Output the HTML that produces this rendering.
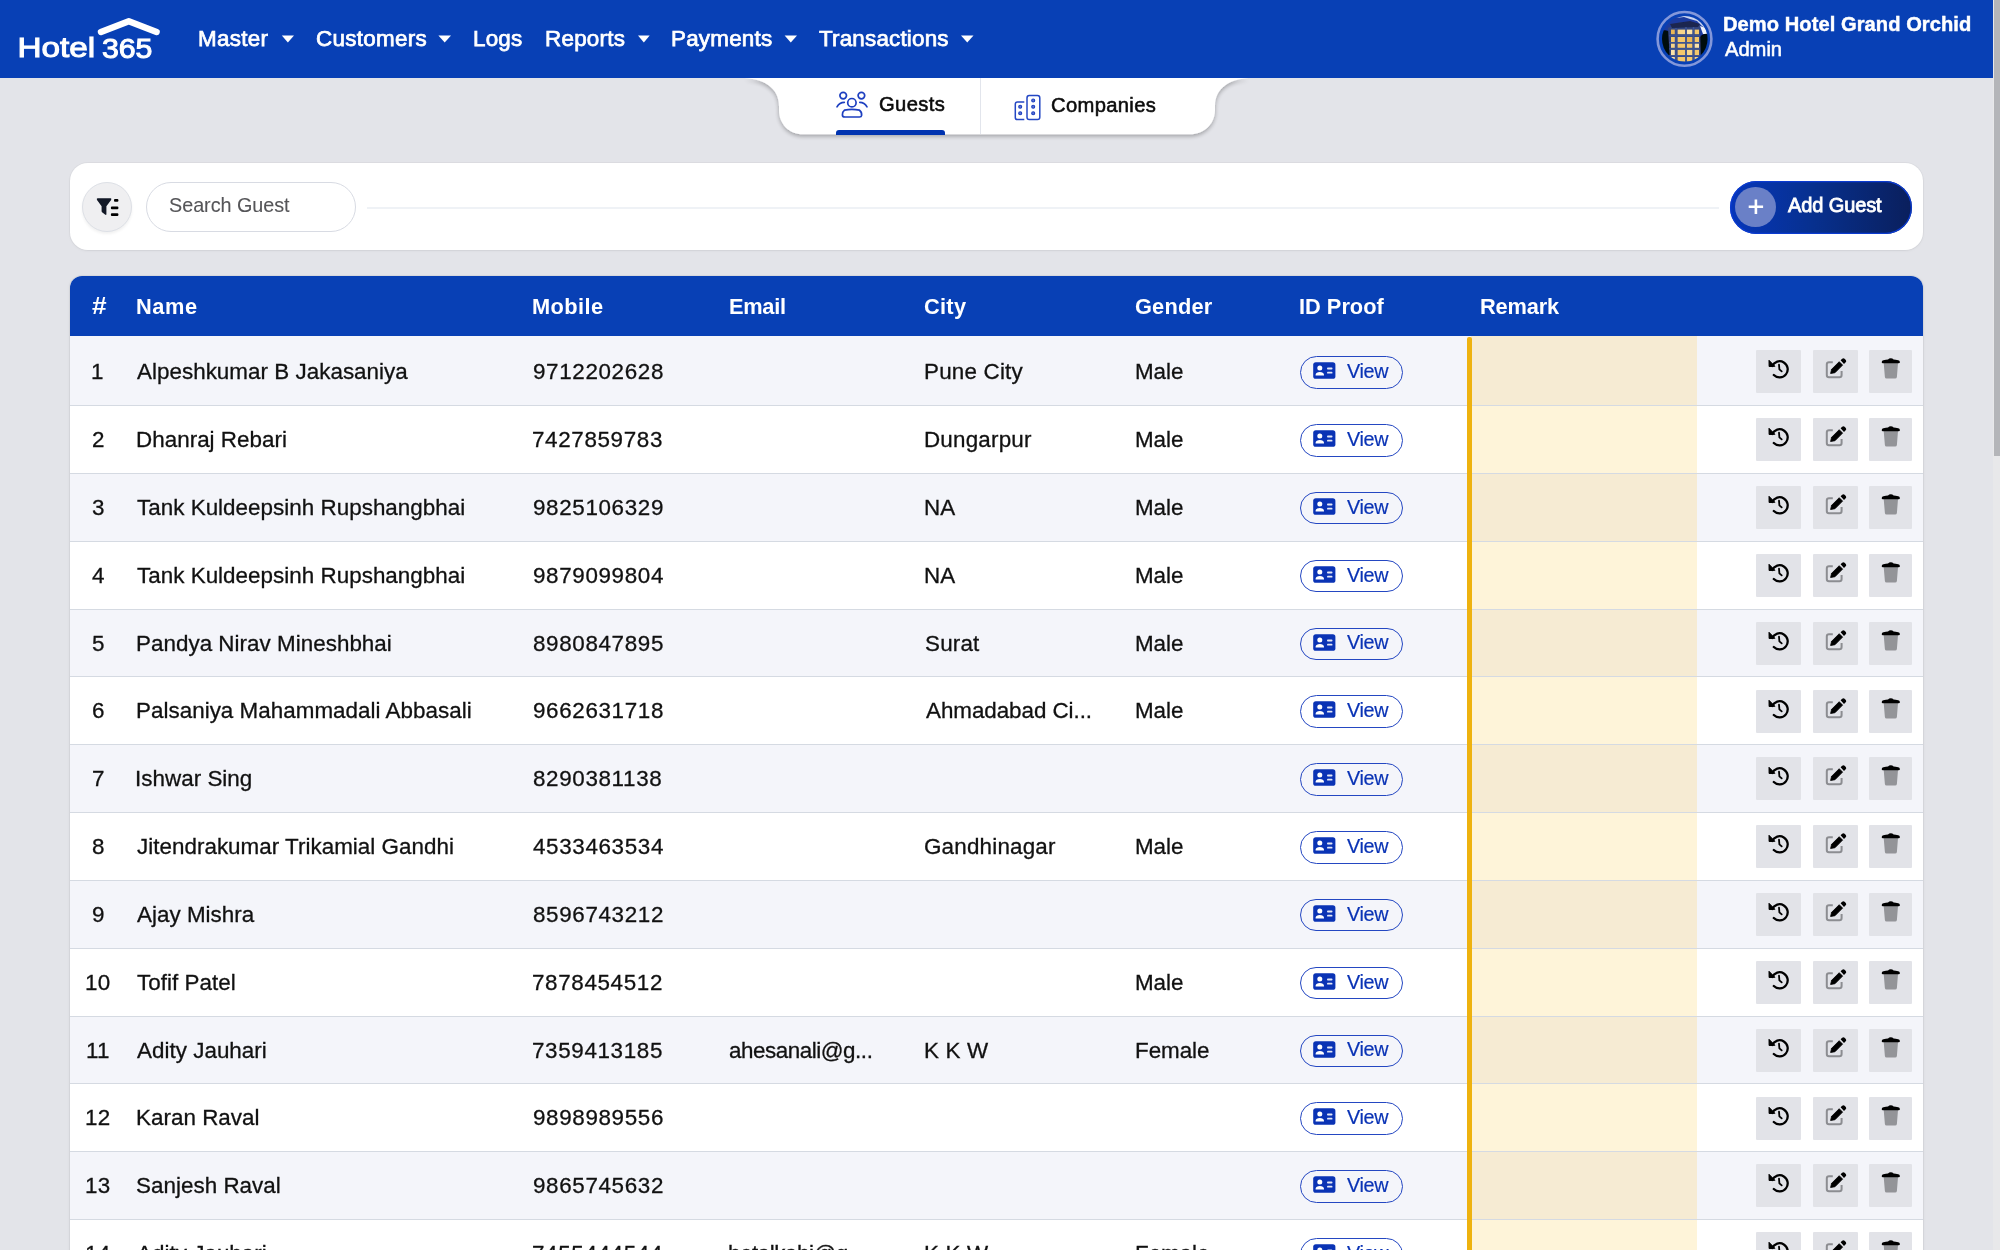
<!DOCTYPE html>
<html><head><meta charset="utf-8"><title>Hotel 365 - Guests</title>
<style>
html,body{margin:0;padding:0;}
body{width:2000px;height:1250px;overflow:hidden;position:relative;background:#E3E4E9;font-family:"Liberation Sans",sans-serif;}
.t{position:absolute;white-space:nowrap;will-change:transform;}
.a{position:absolute;}
svg{position:absolute;overflow:visible;}
</style></head><body>

<div class="a" style="left:0;top:0;width:2000px;height:78px;background:#0840B5;"></div>
<div class="t" style="left:18.14px;top:32px;font-size:27.60px;line-height:31px;color:#fff;-webkit-text-stroke:1.0px #fff;transform:scaleX(1.2061);transform-origin:2.26px 0;">Hotel</div>
<div class="t" style="left:102.35px;top:33px;font-size:27.60px;line-height:31px;color:#fff;-webkit-text-stroke:1.0px #fff;transform:scaleX(1.0976);transform-origin:1.05px 0;">365</div>
<svg style="left:0;top:0" width="200" height="78"><polyline points="101,32 128.8,21.3 156.6,32" fill="none" stroke="#fff" stroke-width="6.4" stroke-linecap="round" stroke-linejoin="round"/></svg>
<div class="t" style="left:198.01px;top:26px;font-size:22.40px;line-height:25px;color:#fff;letter-spacing:0.33px;-webkit-text-stroke:0.75px #fff;">Master</div>
<div class="t" style="left:316.21px;top:26px;font-size:22.40px;line-height:25px;color:#fff;letter-spacing:0.30px;-webkit-text-stroke:0.75px #fff;">Customers</div>
<div class="t" style="left:472.71px;top:26px;font-size:22.40px;line-height:25px;color:#fff;letter-spacing:0.23px;-webkit-text-stroke:0.75px #fff;">Logs</div>
<div class="t" style="left:544.91px;top:26px;font-size:22.40px;line-height:25px;color:#fff;letter-spacing:0.26px;-webkit-text-stroke:0.75px #fff;">Reports</div>
<div class="t" style="left:670.91px;top:26px;font-size:22.40px;line-height:25px;color:#fff;letter-spacing:0.23px;-webkit-text-stroke:0.75px #fff;">Payments</div>
<div class="t" style="left:819.05px;top:26px;font-size:22.40px;line-height:25px;color:#fff;letter-spacing:0.20px;-webkit-text-stroke:0.75px #fff;">Transactions</div>
<svg style="left:0;top:0" width="1000" height="78"><polygon points="281.8,35.6 294,35.6 287.9,42.4" fill="#fff"/><polygon points="438.4,35.6 451,35.6 444.7,42.4" fill="#fff"/><polygon points="638,35.6 649.7,35.6 643.85,42.4" fill="#fff"/><polygon points="784.6,35.6 797,35.6 790.8,42.4" fill="#fff"/><polygon points="961,35.6 973.5,35.6 967.25,42.4" fill="#fff"/></svg>
<svg style="left:1650px;top:5px" width="70" height="70" viewBox="1650 5 70 70">
<defs><clipPath id="av"><circle cx="1684.8" cy="38.9" r="22.8"/></clipPath>
<filter id="avb"><feGaussianBlur stdDeviation="0.45"/></filter></defs>
<circle cx="1684.5" cy="38.9" r="26.9" fill="none" stroke="#8397DA" stroke-width="2.6"/>
<g clip-path="url(#av)"><g filter="url(#avb)">
<rect x="1660" y="15" width="50" height="50" fill="#1C3A9E"/>
<path d="M1676 18 L1684 17 L1690 19 L1697 21 L1702 26 L1708 30 L1708 22 L1690 14Z" fill="#C9D4F0"/>
<path d="M1700 26 L1706 28 L1709 34 L1703 34Z" fill="#F2F4FA"/>
<path d="M1661 31 Q1666 29 1670 32 L1672 40 L1671 66 L1660 66Z" fill="#06070C"/>
<path d="M1709 34 Q1703 33 1700 37 L1699 66 L1709 66Z" fill="#06070C"/>
<path d="M1668 28 L1680 22 L1700 25 L1701 63 L1670 63Z" fill="#33457E"/>
<path d="M1670 24 L1690 21 L1700 24 L1698 27 L1672 28Z" fill="#1A2550"/>
<rect x="1671" y="29.6" width="3.8" height="4.6" fill="#E9B654"/><rect x="1677.6" y="29.6" width="7.6" height="4.6" fill="#F7D58A"/><rect x="1686.8" y="29.6" width="5.6" height="4.6" fill="#FBE2A8"/><rect x="1694.6" y="29.6" width="4.4" height="4.6" fill="#F4C76A"/><rect x="1671" y="37" width="3.8" height="5" fill="#F4C76A"/><rect x="1677.6" y="37" width="7.6" height="5" fill="#F4C76A"/><rect x="1686.8" y="37" width="5.6" height="5" fill="#E9B654"/><rect x="1694.6" y="37" width="4.4" height="5" fill="#F4C76A"/><rect x="1671" y="43.6" width="3.8" height="4.2" fill="#F7D58A"/><rect x="1677.6" y="43.6" width="7.6" height="4.2" fill="#F4C76A"/><rect x="1686.8" y="43.6" width="5.6" height="4.2" fill="#F4C76A"/><rect x="1694.6" y="43.6" width="4.4" height="4.2" fill="#FBE2A8"/><rect x="1671" y="49.8" width="3.8" height="5.4" fill="#FBE2A8"/><rect x="1677.6" y="49.8" width="7.6" height="5.4" fill="#F4C76A"/><rect x="1686.8" y="49.8" width="5.6" height="5.4" fill="#F7D58A"/><rect x="1694.6" y="49.8" width="4.4" height="5.4" fill="#F4C76A"/><rect x="1671" y="57" width="3.8" height="4.6" fill="#FBE2A8"/><rect x="1677.6" y="57" width="7.6" height="4.6" fill="#F4C76A"/><rect x="1686.8" y="57" width="5.6" height="4.6" fill="#F4C76A"/><rect x="1694.6" y="57" width="4.4" height="4.6" fill="#F7D58A"/><path d="M1676 28 L1676 64 M1686 27 L1686 64 M1693.5 27 L1693.5 64" stroke="#3E5595" stroke-width="1.4"/>
<path d="M1669 35.8 L1700 35.8 M1669 42.6 L1700 42.6 M1669 48.9 L1700 48.9 M1669 55.9 L1700 55.9" stroke="#3E5595" stroke-width="1.1"/>
</g></g></svg>
<div class="t" style="left:1723.46px;top:13px;font-size:20.10px;line-height:22px;font-weight:700;color:#fff;letter-spacing:0.07px;-webkit-text-stroke:0.45px #fff;">Demo Hotel Grand Orchid</div>
<div class="t" style="left:1724.76px;top:38px;font-size:20.20px;line-height:22px;color:#fff;letter-spacing:-0.04px;-webkit-text-stroke:0.55px #fff;">Admin</div>
<svg style="left:700px;top:70px" width="600" height="90" viewBox="700 70 600 90">
<defs><filter id="tsh" x="-10%" y="-30%" width="120%" height="170%"><feGaussianBlur in="SourceAlpha" stdDeviation="2.2"/><feOffset dy="1.5"/><feComponentTransfer><feFuncA type="linear" slope="0.3"/></feComponentTransfer><feMerge><feMergeNode/><feMergeNode in="SourceGraphic"/></feMerge></filter></defs>
<path filter="url(#tsh)" d="M740 78 L1253 78 C1230 78 1215 88 1215 106 L1215 110 C1215 124 1204 134.3 1190 134.3 L803 134.3 C789 134.3 779 124 779 110 L779 106 C779 88 764 78 740 78 Z" fill="#fff"/>
</svg>
<div class="a" style="left:0;top:76px;width:2000px;height:2px;background:#0840B5"></div>
<div class="a" style="left:980px;top:78px;width:1.2px;height:56px;background:#E2E5EC"></div>
<div class="a" style="left:836px;top:129.5px;width:109px;height:5px;background:#0033B0;border-radius:3px 3px 0 0"></div>
<div class="t" style="left:878.98px;top:93px;font-size:20.20px;line-height:22px;color:#0b0b0b;letter-spacing:0.37px;-webkit-text-stroke:0.55px #0b0b0b;">Guests</div>
<div class="t" style="left:1051.47px;top:94px;font-size:20.20px;line-height:22px;color:#0b0b0b;letter-spacing:0.34px;-webkit-text-stroke:0.55px #0b0b0b;">Companies</div>
<svg style="left:830px;top:88px" width="45" height="35" viewBox="830 88 45 35" fill="none" stroke="#1D3FC0" stroke-width="1.7" stroke-linecap="round">
<circle cx="843.2" cy="95.6" r="3.3"/><circle cx="861.4" cy="95.6" r="3.3"/><circle cx="851.9" cy="102.7" r="4.2"/>
<path d="M844.5 110.2 Q851.8 108.5 859.5 110.2 Q862 112 861.6 115.5 Q861.4 117 859.5 117 L844.8 117 Q842.4 117 842.4 115 Q842.2 112 844.5 110.2Z"/>
<path d="M837 106.8 Q839.5 102.3 844.3 102.3"/><path d="M859.8 102.3 Q864.5 102.3 867 106.8"/>
</svg>
<svg style="left:1010px;top:90px" width="35" height="35" viewBox="1010 90 35 35" fill="none" stroke="#2447C4" stroke-width="1.5">
<path d="M1024.3 102 L1017.5 102 Q1015.3 102 1015.3 104.2 L1015.3 117.4 Q1015.3 119.6 1017.5 119.6 L1024.3 119.6"/>
<rect x="1027" y="95.6" width="12.8" height="24" rx="2.3"/>
<g fill="#5C74D0" stroke="#1D3FC0" stroke-width="1.1"><circle cx="1033.2" cy="100.5" r="1.5"/><circle cx="1033.2" cy="106.8" r="1.5"/><circle cx="1033.2" cy="113.2" r="1.5"/>
<circle cx="1020.2" cy="106.8" r="1.5"/><circle cx="1020.2" cy="113.2" r="1.5"/></g>
</svg>
<div class="a" style="left:70px;top:163px;width:1853px;height:87px;background:#fff;border-radius:18px;box-shadow:0 0 0 1px rgba(0,0,0,0.035),0 1px 3px rgba(0,0,0,0.05)"></div>
<div class="a" style="left:81.5px;top:181.5px;width:48.5px;height:48.5px;background:#EFEFF1;border:1px solid #DDE0E6;border-radius:50%;box-shadow:0 2px 3px rgba(0,0,0,0.06)"></div>
<div class="a" style="left:145.5px;top:181.5px;width:208px;height:48.5px;background:#fff;border:1.3px solid #D8DBE3;border-radius:26px"></div>
<div class="t" style="left:169.10px;top:194px;font-size:19.80px;line-height:22px;color:#555558;letter-spacing:-0.03px;-webkit-text-stroke:0.1px #555558;">Search Guest</div>
<div class="a" style="left:367px;top:206.8px;width:1352px;height:2px;background:#EFF2F6"></div>
<svg style="left:90px;top:190px" width="36" height="34" viewBox="90 190 36 34">
<path d="M97.6 198.3 L110.6 198.3 Q111.9 198.5 111.1 199.9 L106.4 206.2 L106.4 214 Q106.4 215.6 105 214.6 L102.4 212.6 Q101.6 212 101.6 211 L101.6 206.2 L97 199.9 Q96.3 198.5 97.6 198.3Z" fill="#121826"/>
<rect x="114" y="199" width="4.4" height="2.8" rx="1" fill="#000"/><rect x="110.9" y="206.4" width="7.5" height="2.8" rx="1" fill="#000"/><rect x="110.9" y="213.3" width="7.5" height="2.8" rx="1" fill="#000"/>
</svg>
<div class="a" style="left:1729.7px;top:181px;width:182px;height:53px;border-radius:27px;background:linear-gradient(90deg,#0636BA 0%,#07308F 45%,#0A1F5C 100%);box-shadow:inset 0 0 0 1.3px #0B3BD0"></div>
<div class="a" style="left:1735.3px;top:186.8px;width:41px;height:40.5px;border-radius:50%;background:#6A80C7"></div>
<svg style="left:1740px;top:190px" width="32" height="32" viewBox="1740 190 32 32"><path d="M1755.9 199.5 V213.9 M1748.7 206.7 H1763.1" stroke="#fff" stroke-width="2.6"/></svg>
<div class="t" style="left:1787.96px;top:194px;font-size:20.00px;line-height:22px;color:#fff;letter-spacing:-0.11px;-webkit-text-stroke:0.8px #fff;">Add Guest</div>
<div class="a" style="left:70px;top:276.4px;width:1853px;height:1000px;background:#fff;border-radius:12px 12px 0 0;box-shadow:0 0 0 1px rgba(0,0,0,0.04),0 1px 4px rgba(0,0,0,0.06)"></div>
<div class="a" style="left:70px;top:276.4px;width:1853px;height:60px;background:#0840B5;border-radius:12px 12px 0 0"></div>
<div class="t" style="left:92.01px;top:293px;font-size:23.00px;line-height:26px;font-weight:700;color:#fff;transform:scaleX(1.1422);transform-origin:0.39px 0;">#</div>
<div class="t" style="left:136.04px;top:294px;font-size:21.80px;line-height:25px;font-weight:700;color:#fff;letter-spacing:0.57px;">Name</div>
<div class="t" style="left:531.74px;top:294px;font-size:21.80px;line-height:25px;font-weight:700;color:#fff;letter-spacing:0.43px;">Mobile</div>
<div class="t" style="left:728.54px;top:294px;font-size:21.80px;line-height:25px;font-weight:700;color:#fff;letter-spacing:-0.28px;">Email</div>
<div class="t" style="left:924.11px;top:294px;font-size:21.80px;line-height:25px;font-weight:700;color:#fff;letter-spacing:0.28px;">City</div>
<div class="t" style="left:1135.41px;top:294px;font-size:21.80px;line-height:25px;font-weight:700;color:#fff;letter-spacing:0.17px;">Gender</div>
<div class="t" style="left:1299.04px;top:294px;font-size:21.80px;line-height:25px;font-weight:700;color:#fff;">ID Proof</div>
<div class="t" style="left:1480.44px;top:294px;font-size:21.80px;line-height:25px;font-weight:700;color:#fff;letter-spacing:-0.18px;">Remark</div>
<div class="a" style="left:70px;top:336.00px;width:1853px;height:69.00px;background:#F4F5FA"></div>
<div class="a" style="left:1471px;top:336.00px;width:226px;height:69.00px;background:#F6EBD3"></div>
<div class="a" style="left:70px;top:405.00px;width:1853px;height:68.00px;background:#FFFFFF"></div>
<div class="a" style="left:1471px;top:405.00px;width:226px;height:68.00px;background:#FEF4D9"></div>
<div class="a" style="left:70px;top:473.00px;width:1853px;height:68.00px;background:#F4F5FA"></div>
<div class="a" style="left:1471px;top:473.00px;width:226px;height:68.00px;background:#F6EBD3"></div>
<div class="a" style="left:70px;top:541.00px;width:1853px;height:68.00px;background:#FFFFFF"></div>
<div class="a" style="left:1471px;top:541.00px;width:226px;height:68.00px;background:#FEF4D9"></div>
<div class="a" style="left:70px;top:609.00px;width:1853px;height:67.00px;background:#F4F5FA"></div>
<div class="a" style="left:1471px;top:609.00px;width:226px;height:67.00px;background:#F6EBD3"></div>
<div class="a" style="left:70px;top:676.00px;width:1853px;height:68.00px;background:#FFFFFF"></div>
<div class="a" style="left:1471px;top:676.00px;width:226px;height:68.00px;background:#FEF4D9"></div>
<div class="a" style="left:70px;top:744.00px;width:1853px;height:68.00px;background:#F4F5FA"></div>
<div class="a" style="left:1471px;top:744.00px;width:226px;height:68.00px;background:#F6EBD3"></div>
<div class="a" style="left:70px;top:812.00px;width:1853px;height:68.00px;background:#FFFFFF"></div>
<div class="a" style="left:1471px;top:812.00px;width:226px;height:68.00px;background:#FEF4D9"></div>
<div class="a" style="left:70px;top:880.00px;width:1853px;height:68.00px;background:#F4F5FA"></div>
<div class="a" style="left:1471px;top:880.00px;width:226px;height:68.00px;background:#F6EBD3"></div>
<div class="a" style="left:70px;top:948.00px;width:1853px;height:68.00px;background:#FFFFFF"></div>
<div class="a" style="left:1471px;top:948.00px;width:226px;height:68.00px;background:#FEF4D9"></div>
<div class="a" style="left:70px;top:1016.00px;width:1853px;height:67.00px;background:#F4F5FA"></div>
<div class="a" style="left:1471px;top:1016.00px;width:226px;height:67.00px;background:#F6EBD3"></div>
<div class="a" style="left:70px;top:1083.00px;width:1853px;height:68.00px;background:#FFFFFF"></div>
<div class="a" style="left:1471px;top:1083.00px;width:226px;height:68.00px;background:#FEF4D9"></div>
<div class="a" style="left:70px;top:1151.00px;width:1853px;height:68.00px;background:#F4F5FA"></div>
<div class="a" style="left:1471px;top:1151.00px;width:226px;height:68.00px;background:#F6EBD3"></div>
<div class="a" style="left:70px;top:1219.00px;width:1853px;height:68.00px;background:#FFFFFF"></div>
<div class="a" style="left:1471px;top:1219.00px;width:226px;height:68.00px;background:#FEF4D9"></div>
<div class="a" style="left:70px;top:405px;width:1853px;height:1px;background:#D5DAE2"></div>
<div class="a" style="left:70px;top:473px;width:1853px;height:1px;background:#D5DAE2"></div>
<div class="a" style="left:70px;top:541px;width:1853px;height:1px;background:#D5DAE2"></div>
<div class="a" style="left:70px;top:609px;width:1853px;height:1px;background:#D5DAE2"></div>
<div class="a" style="left:70px;top:676px;width:1853px;height:1px;background:#D5DAE2"></div>
<div class="a" style="left:70px;top:744px;width:1853px;height:1px;background:#D5DAE2"></div>
<div class="a" style="left:70px;top:812px;width:1853px;height:1px;background:#D5DAE2"></div>
<div class="a" style="left:70px;top:880px;width:1853px;height:1px;background:#D5DAE2"></div>
<div class="a" style="left:70px;top:948px;width:1853px;height:1px;background:#D5DAE2"></div>
<div class="a" style="left:70px;top:1016px;width:1853px;height:1px;background:#D5DAE2"></div>
<div class="a" style="left:70px;top:1083px;width:1853px;height:1px;background:#D5DAE2"></div>
<div class="a" style="left:70px;top:1151px;width:1853px;height:1px;background:#D5DAE2"></div>
<div class="a" style="left:70px;top:1219px;width:1853px;height:1px;background:#D5DAE2"></div>
<div class="a" style="left:70px;top:1287px;width:1853px;height:1px;background:#D5DAE2"></div>
<div class="t" style="left:91.35px;top:359px;font-size:22.40px;line-height:25px;color:#111;letter-spacing:0.20px;-webkit-text-stroke:0.3px #111;">1</div>
<div class="t" style="left:137.46px;top:359px;font-size:22.40px;line-height:25px;color:#111;letter-spacing:0.03px;-webkit-text-stroke:0.3px #111;">Alpeshkumar B Jakasaniya</div>
<div class="t" style="left:532.55px;top:359px;font-size:22.40px;line-height:25px;color:#111;letter-spacing:0.65px;-webkit-text-stroke:0.3px #111;">9712202628</div>
<div class="t" style="left:923.76px;top:359px;font-size:22.40px;line-height:25px;color:#111;letter-spacing:0.20px;-webkit-text-stroke:0.3px #111;">Pune City</div>
<div class="t" style="left:1135.26px;top:359px;font-size:22.40px;line-height:25px;color:#111;letter-spacing:-0.05px;-webkit-text-stroke:0.3px #111;">Male</div>
<div class="a" style="left:1300px;top:356.20px;width:103px;height:32.5px;box-sizing:border-box;border:1.8px solid #2447C2;border-radius:17px"></div>
<svg style="left:1310px;top:356.20px" width="30" height="32" viewBox="1310 356.2 30 32"><rect x="1313.2" y="362.4" width="22.2" height="16.6" rx="2.6" fill="#0A33B5"/><circle cx="1319.8" cy="368.2" r="2.5" fill="#fff"/><path d="M1315.6 375 Q1316 372.2 1319.8 372.2 Q1323.6 372.2 1324 375 L1324 375.6 L1315.6 375.6Z" fill="#fff"/><rect x="1327" y="367.8" width="5.5" height="1.8" rx="0.9" fill="#E4E8F6"/><rect x="1327" y="372" width="5.5" height="1.8" rx="0.9" fill="#E4E8F6"/></svg>
<div class="t" style="left:1347.31px;top:360px;font-size:19.80px;line-height:22px;color:#0A33B5;letter-spacing:-0.32px;-webkit-text-stroke:0.2px #0A33B5;">View</div>
<div class="a" style="left:1756.3px;top:350.30px;width:45px;height:43px;background:#E2E3E8;border-radius:1px"></div>
<div class="a" style="left:1812.6px;top:350.30px;width:45px;height:43px;background:#E2E3E8;border-radius:1px"></div>
<div class="a" style="left:1868.7px;top:350.30px;width:43.3px;height:43px;background:#E2E3E8;border-radius:1px"></div>
<svg style="left:1756px;top:350.30px" width="160" height="44" viewBox="1756 350.3 160 44"><g transform="translate(0,0)">
<path d="M1772.2 366.3 A8.1 8.1 0 1 1 1773.8 375.3" fill="none" stroke="#000" stroke-width="2.3" stroke-linecap="round"/>
<path d="M1769 360.6 L1774.9 366.6 L1769.1 366.8 Z" fill="#000" stroke="#000" stroke-width="1" stroke-linejoin="round"/>
<path d="M1779 365 L1779.4 369.6 L1781.7 371.7" fill="none" stroke="#000" stroke-width="1.8" stroke-linecap="round" stroke-linejoin="round"/>
<path d="M1832.8 362.6 L1829 362.6 Q1826.8 362.6 1826.8 364.8 L1826.8 375.4 Q1826.8 377.6 1829 377.6 L1839.4 377.6 Q1841.6 377.6 1841.6 375.4 L1841.6 371.4" fill="none" stroke="#8C8D91" stroke-width="2"/>
<path d="M1830.6 373.8 L1831.6 369.6 L1839.2 362 L1842.6 365.4 L1835 373 Z" fill="#000" stroke="#000" stroke-width="0.8" stroke-linejoin="round"/>
<path d="M1840.6 360.6 L1842.2 359 Q1843.4 357.9 1844.6 359 L1845.8 360.2 Q1846.8 361.4 1845.7 362.5 L1844 364.2 Z" fill="#000"/>
<path d="M1883.7 363.4 L1898 363.4 L1896.9 377.2 Q1896.7 378.8 1895.1 378.8 L1886.6 378.8 Q1885 378.8 1884.9 377.2 Z" fill="#939498"/>
<path d="M1883 363.6 Q1881.6 363.6 1881.7 362.3 Q1881.9 360.9 1883.4 360.6 Q1886 360 1888 359.8 Q1889.1 358.5 1890.8 358.5 Q1892.5 358.5 1893.6 359.8 Q1895.6 360 1898.2 360.6 Q1899.7 360.9 1899.9 362.3 Q1900 363.6 1898.6 363.6 Z" fill="#000"/>
</g></svg>
<div class="t" style="left:91.64px;top:427px;font-size:22.40px;line-height:25px;color:#111;letter-spacing:0.20px;-webkit-text-stroke:0.3px #111;">2</div>
<div class="t" style="left:135.66px;top:427px;font-size:22.40px;line-height:25px;color:#111;letter-spacing:0.03px;-webkit-text-stroke:0.3px #111;">Dhanraj Rebari</div>
<div class="t" style="left:532.45px;top:427px;font-size:22.40px;line-height:25px;color:#111;letter-spacing:0.65px;-webkit-text-stroke:0.3px #111;">7427859783</div>
<div class="t" style="left:923.76px;top:427px;font-size:22.40px;line-height:25px;color:#111;letter-spacing:0.20px;-webkit-text-stroke:0.3px #111;">Dungarpur</div>
<div class="t" style="left:1135.26px;top:427px;font-size:22.40px;line-height:25px;color:#111;letter-spacing:-0.05px;-webkit-text-stroke:0.3px #111;">Male</div>
<div class="a" style="left:1300px;top:424.04px;width:103px;height:32.5px;box-sizing:border-box;border:1.8px solid #2447C2;border-radius:17px"></div>
<svg style="left:1310px;top:424.04px" width="30" height="32" viewBox="1310 356.2 30 32"><rect x="1313.2" y="362.4" width="22.2" height="16.6" rx="2.6" fill="#0A33B5"/><circle cx="1319.8" cy="368.2" r="2.5" fill="#fff"/><path d="M1315.6 375 Q1316 372.2 1319.8 372.2 Q1323.6 372.2 1324 375 L1324 375.6 L1315.6 375.6Z" fill="#fff"/><rect x="1327" y="367.8" width="5.5" height="1.8" rx="0.9" fill="#E4E8F6"/><rect x="1327" y="372" width="5.5" height="1.8" rx="0.9" fill="#E4E8F6"/></svg>
<div class="t" style="left:1347.31px;top:428px;font-size:19.80px;line-height:22px;color:#0A33B5;letter-spacing:-0.32px;-webkit-text-stroke:0.2px #0A33B5;">View</div>
<div class="a" style="left:1756.3px;top:418.14px;width:45px;height:43px;background:#E2E3E8;border-radius:1px"></div>
<div class="a" style="left:1812.6px;top:418.14px;width:45px;height:43px;background:#E2E3E8;border-radius:1px"></div>
<div class="a" style="left:1868.7px;top:418.14px;width:43.3px;height:43px;background:#E2E3E8;border-radius:1px"></div>
<svg style="left:1756px;top:418.14px" width="160" height="44" viewBox="1756 350.3 160 44"><g transform="translate(0,0)">
<path d="M1772.2 366.3 A8.1 8.1 0 1 1 1773.8 375.3" fill="none" stroke="#000" stroke-width="2.3" stroke-linecap="round"/>
<path d="M1769 360.6 L1774.9 366.6 L1769.1 366.8 Z" fill="#000" stroke="#000" stroke-width="1" stroke-linejoin="round"/>
<path d="M1779 365 L1779.4 369.6 L1781.7 371.7" fill="none" stroke="#000" stroke-width="1.8" stroke-linecap="round" stroke-linejoin="round"/>
<path d="M1832.8 362.6 L1829 362.6 Q1826.8 362.6 1826.8 364.8 L1826.8 375.4 Q1826.8 377.6 1829 377.6 L1839.4 377.6 Q1841.6 377.6 1841.6 375.4 L1841.6 371.4" fill="none" stroke="#8C8D91" stroke-width="2"/>
<path d="M1830.6 373.8 L1831.6 369.6 L1839.2 362 L1842.6 365.4 L1835 373 Z" fill="#000" stroke="#000" stroke-width="0.8" stroke-linejoin="round"/>
<path d="M1840.6 360.6 L1842.2 359 Q1843.4 357.9 1844.6 359 L1845.8 360.2 Q1846.8 361.4 1845.7 362.5 L1844 364.2 Z" fill="#000"/>
<path d="M1883.7 363.4 L1898 363.4 L1896.9 377.2 Q1896.7 378.8 1895.1 378.8 L1886.6 378.8 Q1885 378.8 1884.9 377.2 Z" fill="#939498"/>
<path d="M1883 363.6 Q1881.6 363.6 1881.7 362.3 Q1881.9 360.9 1883.4 360.6 Q1886 360 1888 359.8 Q1889.1 358.5 1890.8 358.5 Q1892.5 358.5 1893.6 359.8 Q1895.6 360 1898.2 360.6 Q1899.7 360.9 1899.9 362.3 Q1900 363.6 1898.6 363.6 Z" fill="#000"/>
</g></svg>
<div class="t" style="left:91.77px;top:495px;font-size:22.40px;line-height:25px;color:#111;letter-spacing:0.20px;-webkit-text-stroke:0.3px #111;">3</div>
<div class="t" style="left:137.00px;top:495px;font-size:22.40px;line-height:25px;color:#111;letter-spacing:0.03px;-webkit-text-stroke:0.3px #111;">Tank Kuldeepsinh Rupshangbhai</div>
<div class="t" style="left:532.55px;top:495px;font-size:22.40px;line-height:25px;color:#111;letter-spacing:0.65px;-webkit-text-stroke:0.3px #111;">9825106329</div>
<div class="t" style="left:923.76px;top:495px;font-size:22.40px;line-height:25px;color:#111;letter-spacing:0.20px;-webkit-text-stroke:0.3px #111;">NA</div>
<div class="t" style="left:1135.26px;top:495px;font-size:22.40px;line-height:25px;color:#111;letter-spacing:-0.05px;-webkit-text-stroke:0.3px #111;">Male</div>
<div class="a" style="left:1300px;top:491.88px;width:103px;height:32.5px;box-sizing:border-box;border:1.8px solid #2447C2;border-radius:17px"></div>
<svg style="left:1310px;top:491.88px" width="30" height="32" viewBox="1310 356.2 30 32"><rect x="1313.2" y="362.4" width="22.2" height="16.6" rx="2.6" fill="#0A33B5"/><circle cx="1319.8" cy="368.2" r="2.5" fill="#fff"/><path d="M1315.6 375 Q1316 372.2 1319.8 372.2 Q1323.6 372.2 1324 375 L1324 375.6 L1315.6 375.6Z" fill="#fff"/><rect x="1327" y="367.8" width="5.5" height="1.8" rx="0.9" fill="#E4E8F6"/><rect x="1327" y="372" width="5.5" height="1.8" rx="0.9" fill="#E4E8F6"/></svg>
<div class="t" style="left:1347.31px;top:496px;font-size:19.80px;line-height:22px;color:#0A33B5;letter-spacing:-0.32px;-webkit-text-stroke:0.2px #0A33B5;">View</div>
<div class="a" style="left:1756.3px;top:485.98px;width:45px;height:43px;background:#E2E3E8;border-radius:1px"></div>
<div class="a" style="left:1812.6px;top:485.98px;width:45px;height:43px;background:#E2E3E8;border-radius:1px"></div>
<div class="a" style="left:1868.7px;top:485.98px;width:43.3px;height:43px;background:#E2E3E8;border-radius:1px"></div>
<svg style="left:1756px;top:485.98px" width="160" height="44" viewBox="1756 350.3 160 44"><g transform="translate(0,0)">
<path d="M1772.2 366.3 A8.1 8.1 0 1 1 1773.8 375.3" fill="none" stroke="#000" stroke-width="2.3" stroke-linecap="round"/>
<path d="M1769 360.6 L1774.9 366.6 L1769.1 366.8 Z" fill="#000" stroke="#000" stroke-width="1" stroke-linejoin="round"/>
<path d="M1779 365 L1779.4 369.6 L1781.7 371.7" fill="none" stroke="#000" stroke-width="1.8" stroke-linecap="round" stroke-linejoin="round"/>
<path d="M1832.8 362.6 L1829 362.6 Q1826.8 362.6 1826.8 364.8 L1826.8 375.4 Q1826.8 377.6 1829 377.6 L1839.4 377.6 Q1841.6 377.6 1841.6 375.4 L1841.6 371.4" fill="none" stroke="#8C8D91" stroke-width="2"/>
<path d="M1830.6 373.8 L1831.6 369.6 L1839.2 362 L1842.6 365.4 L1835 373 Z" fill="#000" stroke="#000" stroke-width="0.8" stroke-linejoin="round"/>
<path d="M1840.6 360.6 L1842.2 359 Q1843.4 357.9 1844.6 359 L1845.8 360.2 Q1846.8 361.4 1845.7 362.5 L1844 364.2 Z" fill="#000"/>
<path d="M1883.7 363.4 L1898 363.4 L1896.9 377.2 Q1896.7 378.8 1895.1 378.8 L1886.6 378.8 Q1885 378.8 1884.9 377.2 Z" fill="#939498"/>
<path d="M1883 363.6 Q1881.6 363.6 1881.7 362.3 Q1881.9 360.9 1883.4 360.6 Q1886 360 1888 359.8 Q1889.1 358.5 1890.8 358.5 Q1892.5 358.5 1893.6 359.8 Q1895.6 360 1898.2 360.6 Q1899.7 360.9 1899.9 362.3 Q1900 363.6 1898.6 363.6 Z" fill="#000"/>
</g></svg>
<div class="t" style="left:91.94px;top:563px;font-size:22.40px;line-height:25px;color:#111;letter-spacing:0.20px;-webkit-text-stroke:0.3px #111;">4</div>
<div class="t" style="left:137.00px;top:563px;font-size:22.40px;line-height:25px;color:#111;letter-spacing:0.03px;-webkit-text-stroke:0.3px #111;">Tank Kuldeepsinh Rupshangbhai</div>
<div class="t" style="left:532.55px;top:563px;font-size:22.40px;line-height:25px;color:#111;letter-spacing:0.65px;-webkit-text-stroke:0.3px #111;">9879099804</div>
<div class="t" style="left:923.76px;top:563px;font-size:22.40px;line-height:25px;color:#111;letter-spacing:0.20px;-webkit-text-stroke:0.3px #111;">NA</div>
<div class="t" style="left:1135.26px;top:563px;font-size:22.40px;line-height:25px;color:#111;letter-spacing:-0.05px;-webkit-text-stroke:0.3px #111;">Male</div>
<div class="a" style="left:1300px;top:559.72px;width:103px;height:32.5px;box-sizing:border-box;border:1.8px solid #2447C2;border-radius:17px"></div>
<svg style="left:1310px;top:559.72px" width="30" height="32" viewBox="1310 356.2 30 32"><rect x="1313.2" y="362.4" width="22.2" height="16.6" rx="2.6" fill="#0A33B5"/><circle cx="1319.8" cy="368.2" r="2.5" fill="#fff"/><path d="M1315.6 375 Q1316 372.2 1319.8 372.2 Q1323.6 372.2 1324 375 L1324 375.6 L1315.6 375.6Z" fill="#fff"/><rect x="1327" y="367.8" width="5.5" height="1.8" rx="0.9" fill="#E4E8F6"/><rect x="1327" y="372" width="5.5" height="1.8" rx="0.9" fill="#E4E8F6"/></svg>
<div class="t" style="left:1347.31px;top:564px;font-size:19.80px;line-height:22px;color:#0A33B5;letter-spacing:-0.32px;-webkit-text-stroke:0.2px #0A33B5;">View</div>
<div class="a" style="left:1756.3px;top:553.82px;width:45px;height:43px;background:#E2E3E8;border-radius:1px"></div>
<div class="a" style="left:1812.6px;top:553.82px;width:45px;height:43px;background:#E2E3E8;border-radius:1px"></div>
<div class="a" style="left:1868.7px;top:553.82px;width:43.3px;height:43px;background:#E2E3E8;border-radius:1px"></div>
<svg style="left:1756px;top:553.82px" width="160" height="44" viewBox="1756 350.3 160 44"><g transform="translate(0,0)">
<path d="M1772.2 366.3 A8.1 8.1 0 1 1 1773.8 375.3" fill="none" stroke="#000" stroke-width="2.3" stroke-linecap="round"/>
<path d="M1769 360.6 L1774.9 366.6 L1769.1 366.8 Z" fill="#000" stroke="#000" stroke-width="1" stroke-linejoin="round"/>
<path d="M1779 365 L1779.4 369.6 L1781.7 371.7" fill="none" stroke="#000" stroke-width="1.8" stroke-linecap="round" stroke-linejoin="round"/>
<path d="M1832.8 362.6 L1829 362.6 Q1826.8 362.6 1826.8 364.8 L1826.8 375.4 Q1826.8 377.6 1829 377.6 L1839.4 377.6 Q1841.6 377.6 1841.6 375.4 L1841.6 371.4" fill="none" stroke="#8C8D91" stroke-width="2"/>
<path d="M1830.6 373.8 L1831.6 369.6 L1839.2 362 L1842.6 365.4 L1835 373 Z" fill="#000" stroke="#000" stroke-width="0.8" stroke-linejoin="round"/>
<path d="M1840.6 360.6 L1842.2 359 Q1843.4 357.9 1844.6 359 L1845.8 360.2 Q1846.8 361.4 1845.7 362.5 L1844 364.2 Z" fill="#000"/>
<path d="M1883.7 363.4 L1898 363.4 L1896.9 377.2 Q1896.7 378.8 1895.1 378.8 L1886.6 378.8 Q1885 378.8 1884.9 377.2 Z" fill="#939498"/>
<path d="M1883 363.6 Q1881.6 363.6 1881.7 362.3 Q1881.9 360.9 1883.4 360.6 Q1886 360 1888 359.8 Q1889.1 358.5 1890.8 358.5 Q1892.5 358.5 1893.6 359.8 Q1895.6 360 1898.2 360.6 Q1899.7 360.9 1899.9 362.3 Q1900 363.6 1898.6 363.6 Z" fill="#000"/>
</g></svg>
<div class="t" style="left:91.75px;top:631px;font-size:22.40px;line-height:25px;color:#111;letter-spacing:0.20px;-webkit-text-stroke:0.3px #111;">5</div>
<div class="t" style="left:135.66px;top:631px;font-size:22.40px;line-height:25px;color:#111;letter-spacing:0.03px;-webkit-text-stroke:0.3px #111;">Pandya Nirav Mineshbhai</div>
<div class="t" style="left:532.63px;top:631px;font-size:22.40px;line-height:25px;color:#111;letter-spacing:0.65px;-webkit-text-stroke:0.3px #111;">8980847895</div>
<div class="t" style="left:924.58px;top:631px;font-size:22.40px;line-height:25px;color:#111;letter-spacing:0.20px;-webkit-text-stroke:0.3px #111;">Surat</div>
<div class="t" style="left:1135.26px;top:631px;font-size:22.40px;line-height:25px;color:#111;letter-spacing:-0.05px;-webkit-text-stroke:0.3px #111;">Male</div>
<div class="a" style="left:1300px;top:627.56px;width:103px;height:32.5px;box-sizing:border-box;border:1.8px solid #2447C2;border-radius:17px"></div>
<svg style="left:1310px;top:627.56px" width="30" height="32" viewBox="1310 356.2 30 32"><rect x="1313.2" y="362.4" width="22.2" height="16.6" rx="2.6" fill="#0A33B5"/><circle cx="1319.8" cy="368.2" r="2.5" fill="#fff"/><path d="M1315.6 375 Q1316 372.2 1319.8 372.2 Q1323.6 372.2 1324 375 L1324 375.6 L1315.6 375.6Z" fill="#fff"/><rect x="1327" y="367.8" width="5.5" height="1.8" rx="0.9" fill="#E4E8F6"/><rect x="1327" y="372" width="5.5" height="1.8" rx="0.9" fill="#E4E8F6"/></svg>
<div class="t" style="left:1347.31px;top:631px;font-size:19.80px;line-height:22px;color:#0A33B5;letter-spacing:-0.32px;-webkit-text-stroke:0.2px #0A33B5;">View</div>
<div class="a" style="left:1756.3px;top:621.66px;width:45px;height:43px;background:#E2E3E8;border-radius:1px"></div>
<div class="a" style="left:1812.6px;top:621.66px;width:45px;height:43px;background:#E2E3E8;border-radius:1px"></div>
<div class="a" style="left:1868.7px;top:621.66px;width:43.3px;height:43px;background:#E2E3E8;border-radius:1px"></div>
<svg style="left:1756px;top:621.66px" width="160" height="44" viewBox="1756 350.3 160 44"><g transform="translate(0,0)">
<path d="M1772.2 366.3 A8.1 8.1 0 1 1 1773.8 375.3" fill="none" stroke="#000" stroke-width="2.3" stroke-linecap="round"/>
<path d="M1769 360.6 L1774.9 366.6 L1769.1 366.8 Z" fill="#000" stroke="#000" stroke-width="1" stroke-linejoin="round"/>
<path d="M1779 365 L1779.4 369.6 L1781.7 371.7" fill="none" stroke="#000" stroke-width="1.8" stroke-linecap="round" stroke-linejoin="round"/>
<path d="M1832.8 362.6 L1829 362.6 Q1826.8 362.6 1826.8 364.8 L1826.8 375.4 Q1826.8 377.6 1829 377.6 L1839.4 377.6 Q1841.6 377.6 1841.6 375.4 L1841.6 371.4" fill="none" stroke="#8C8D91" stroke-width="2"/>
<path d="M1830.6 373.8 L1831.6 369.6 L1839.2 362 L1842.6 365.4 L1835 373 Z" fill="#000" stroke="#000" stroke-width="0.8" stroke-linejoin="round"/>
<path d="M1840.6 360.6 L1842.2 359 Q1843.4 357.9 1844.6 359 L1845.8 360.2 Q1846.8 361.4 1845.7 362.5 L1844 364.2 Z" fill="#000"/>
<path d="M1883.7 363.4 L1898 363.4 L1896.9 377.2 Q1896.7 378.8 1895.1 378.8 L1886.6 378.8 Q1885 378.8 1884.9 377.2 Z" fill="#939498"/>
<path d="M1883 363.6 Q1881.6 363.6 1881.7 362.3 Q1881.9 360.9 1883.4 360.6 Q1886 360 1888 359.8 Q1889.1 358.5 1890.8 358.5 Q1892.5 358.5 1893.6 359.8 Q1895.6 360 1898.2 360.6 Q1899.7 360.9 1899.9 362.3 Q1900 363.6 1898.6 363.6 Z" fill="#000"/>
</g></svg>
<div class="t" style="left:91.63px;top:698px;font-size:22.40px;line-height:25px;color:#111;letter-spacing:0.20px;-webkit-text-stroke:0.3px #111;">6</div>
<div class="t" style="left:135.66px;top:698px;font-size:22.40px;line-height:25px;color:#111;letter-spacing:0.03px;-webkit-text-stroke:0.3px #111;">Palsaniya Mahammadali Abbasali</div>
<div class="t" style="left:532.55px;top:698px;font-size:22.40px;line-height:25px;color:#111;letter-spacing:0.65px;-webkit-text-stroke:0.3px #111;">9662631718</div>
<div class="t" style="left:925.56px;top:698px;font-size:22.40px;line-height:25px;color:#111;letter-spacing:-0.05px;-webkit-text-stroke:0.3px #111;">Ahmadabad Ci...</div>
<div class="t" style="left:1135.26px;top:698px;font-size:22.40px;line-height:25px;color:#111;letter-spacing:-0.05px;-webkit-text-stroke:0.3px #111;">Male</div>
<div class="a" style="left:1300px;top:695.40px;width:103px;height:32.5px;box-sizing:border-box;border:1.8px solid #2447C2;border-radius:17px"></div>
<svg style="left:1310px;top:695.40px" width="30" height="32" viewBox="1310 356.2 30 32"><rect x="1313.2" y="362.4" width="22.2" height="16.6" rx="2.6" fill="#0A33B5"/><circle cx="1319.8" cy="368.2" r="2.5" fill="#fff"/><path d="M1315.6 375 Q1316 372.2 1319.8 372.2 Q1323.6 372.2 1324 375 L1324 375.6 L1315.6 375.6Z" fill="#fff"/><rect x="1327" y="367.8" width="5.5" height="1.8" rx="0.9" fill="#E4E8F6"/><rect x="1327" y="372" width="5.5" height="1.8" rx="0.9" fill="#E4E8F6"/></svg>
<div class="t" style="left:1347.31px;top:699px;font-size:19.80px;line-height:22px;color:#0A33B5;letter-spacing:-0.32px;-webkit-text-stroke:0.2px #0A33B5;">View</div>
<div class="a" style="left:1756.3px;top:689.50px;width:45px;height:43px;background:#E2E3E8;border-radius:1px"></div>
<div class="a" style="left:1812.6px;top:689.50px;width:45px;height:43px;background:#E2E3E8;border-radius:1px"></div>
<div class="a" style="left:1868.7px;top:689.50px;width:43.3px;height:43px;background:#E2E3E8;border-radius:1px"></div>
<svg style="left:1756px;top:689.50px" width="160" height="44" viewBox="1756 350.3 160 44"><g transform="translate(0,0)">
<path d="M1772.2 366.3 A8.1 8.1 0 1 1 1773.8 375.3" fill="none" stroke="#000" stroke-width="2.3" stroke-linecap="round"/>
<path d="M1769 360.6 L1774.9 366.6 L1769.1 366.8 Z" fill="#000" stroke="#000" stroke-width="1" stroke-linejoin="round"/>
<path d="M1779 365 L1779.4 369.6 L1781.7 371.7" fill="none" stroke="#000" stroke-width="1.8" stroke-linecap="round" stroke-linejoin="round"/>
<path d="M1832.8 362.6 L1829 362.6 Q1826.8 362.6 1826.8 364.8 L1826.8 375.4 Q1826.8 377.6 1829 377.6 L1839.4 377.6 Q1841.6 377.6 1841.6 375.4 L1841.6 371.4" fill="none" stroke="#8C8D91" stroke-width="2"/>
<path d="M1830.6 373.8 L1831.6 369.6 L1839.2 362 L1842.6 365.4 L1835 373 Z" fill="#000" stroke="#000" stroke-width="0.8" stroke-linejoin="round"/>
<path d="M1840.6 360.6 L1842.2 359 Q1843.4 357.9 1844.6 359 L1845.8 360.2 Q1846.8 361.4 1845.7 362.5 L1844 364.2 Z" fill="#000"/>
<path d="M1883.7 363.4 L1898 363.4 L1896.9 377.2 Q1896.7 378.8 1895.1 378.8 L1886.6 378.8 Q1885 378.8 1884.9 377.2 Z" fill="#939498"/>
<path d="M1883 363.6 Q1881.6 363.6 1881.7 362.3 Q1881.9 360.9 1883.4 360.6 Q1886 360 1888 359.8 Q1889.1 358.5 1890.8 358.5 Q1892.5 358.5 1893.6 359.8 Q1895.6 360 1898.2 360.6 Q1899.7 360.9 1899.9 362.3 Q1900 363.6 1898.6 363.6 Z" fill="#000"/>
</g></svg>
<div class="t" style="left:91.63px;top:766px;font-size:22.40px;line-height:25px;color:#111;letter-spacing:0.20px;-webkit-text-stroke:0.3px #111;">7</div>
<div class="t" style="left:135.43px;top:766px;font-size:22.40px;line-height:25px;color:#111;letter-spacing:0.03px;-webkit-text-stroke:0.3px #111;">Ishwar Sing</div>
<div class="t" style="left:532.63px;top:766px;font-size:22.40px;line-height:25px;color:#111;letter-spacing:0.65px;-webkit-text-stroke:0.3px #111;">8290381138</div>
<div class="a" style="left:1300px;top:763.24px;width:103px;height:32.5px;box-sizing:border-box;border:1.8px solid #2447C2;border-radius:17px"></div>
<svg style="left:1310px;top:763.24px" width="30" height="32" viewBox="1310 356.2 30 32"><rect x="1313.2" y="362.4" width="22.2" height="16.6" rx="2.6" fill="#0A33B5"/><circle cx="1319.8" cy="368.2" r="2.5" fill="#fff"/><path d="M1315.6 375 Q1316 372.2 1319.8 372.2 Q1323.6 372.2 1324 375 L1324 375.6 L1315.6 375.6Z" fill="#fff"/><rect x="1327" y="367.8" width="5.5" height="1.8" rx="0.9" fill="#E4E8F6"/><rect x="1327" y="372" width="5.5" height="1.8" rx="0.9" fill="#E4E8F6"/></svg>
<div class="t" style="left:1347.31px;top:767px;font-size:19.80px;line-height:22px;color:#0A33B5;letter-spacing:-0.32px;-webkit-text-stroke:0.2px #0A33B5;">View</div>
<div class="a" style="left:1756.3px;top:757.34px;width:45px;height:43px;background:#E2E3E8;border-radius:1px"></div>
<div class="a" style="left:1812.6px;top:757.34px;width:45px;height:43px;background:#E2E3E8;border-radius:1px"></div>
<div class="a" style="left:1868.7px;top:757.34px;width:43.3px;height:43px;background:#E2E3E8;border-radius:1px"></div>
<svg style="left:1756px;top:757.34px" width="160" height="44" viewBox="1756 350.3 160 44"><g transform="translate(0,0)">
<path d="M1772.2 366.3 A8.1 8.1 0 1 1 1773.8 375.3" fill="none" stroke="#000" stroke-width="2.3" stroke-linecap="round"/>
<path d="M1769 360.6 L1774.9 366.6 L1769.1 366.8 Z" fill="#000" stroke="#000" stroke-width="1" stroke-linejoin="round"/>
<path d="M1779 365 L1779.4 369.6 L1781.7 371.7" fill="none" stroke="#000" stroke-width="1.8" stroke-linecap="round" stroke-linejoin="round"/>
<path d="M1832.8 362.6 L1829 362.6 Q1826.8 362.6 1826.8 364.8 L1826.8 375.4 Q1826.8 377.6 1829 377.6 L1839.4 377.6 Q1841.6 377.6 1841.6 375.4 L1841.6 371.4" fill="none" stroke="#8C8D91" stroke-width="2"/>
<path d="M1830.6 373.8 L1831.6 369.6 L1839.2 362 L1842.6 365.4 L1835 373 Z" fill="#000" stroke="#000" stroke-width="0.8" stroke-linejoin="round"/>
<path d="M1840.6 360.6 L1842.2 359 Q1843.4 357.9 1844.6 359 L1845.8 360.2 Q1846.8 361.4 1845.7 362.5 L1844 364.2 Z" fill="#000"/>
<path d="M1883.7 363.4 L1898 363.4 L1896.9 377.2 Q1896.7 378.8 1895.1 378.8 L1886.6 378.8 Q1885 378.8 1884.9 377.2 Z" fill="#939498"/>
<path d="M1883 363.6 Q1881.6 363.6 1881.7 362.3 Q1881.9 360.9 1883.4 360.6 Q1886 360 1888 359.8 Q1889.1 358.5 1890.8 358.5 Q1892.5 358.5 1893.6 359.8 Q1895.6 360 1898.2 360.6 Q1899.7 360.9 1899.9 362.3 Q1900 363.6 1898.6 363.6 Z" fill="#000"/>
</g></svg>
<div class="t" style="left:91.71px;top:834px;font-size:22.40px;line-height:25px;color:#111;letter-spacing:0.20px;-webkit-text-stroke:0.3px #111;">8</div>
<div class="t" style="left:137.15px;top:834px;font-size:22.40px;line-height:25px;color:#111;letter-spacing:0.03px;-webkit-text-stroke:0.3px #111;">Jitendrakumar Trikamial Gandhi</div>
<div class="t" style="left:533.09px;top:834px;font-size:22.40px;line-height:25px;color:#111;letter-spacing:0.65px;-webkit-text-stroke:0.3px #111;">4533463534</div>
<div class="t" style="left:924.47px;top:834px;font-size:22.40px;line-height:25px;color:#111;letter-spacing:0.20px;-webkit-text-stroke:0.3px #111;">Gandhinagar</div>
<div class="t" style="left:1135.26px;top:834px;font-size:22.40px;line-height:25px;color:#111;letter-spacing:-0.05px;-webkit-text-stroke:0.3px #111;">Male</div>
<div class="a" style="left:1300px;top:831.08px;width:103px;height:32.5px;box-sizing:border-box;border:1.8px solid #2447C2;border-radius:17px"></div>
<svg style="left:1310px;top:831.08px" width="30" height="32" viewBox="1310 356.2 30 32"><rect x="1313.2" y="362.4" width="22.2" height="16.6" rx="2.6" fill="#0A33B5"/><circle cx="1319.8" cy="368.2" r="2.5" fill="#fff"/><path d="M1315.6 375 Q1316 372.2 1319.8 372.2 Q1323.6 372.2 1324 375 L1324 375.6 L1315.6 375.6Z" fill="#fff"/><rect x="1327" y="367.8" width="5.5" height="1.8" rx="0.9" fill="#E4E8F6"/><rect x="1327" y="372" width="5.5" height="1.8" rx="0.9" fill="#E4E8F6"/></svg>
<div class="t" style="left:1347.31px;top:835px;font-size:19.80px;line-height:22px;color:#0A33B5;letter-spacing:-0.32px;-webkit-text-stroke:0.2px #0A33B5;">View</div>
<div class="a" style="left:1756.3px;top:825.18px;width:45px;height:43px;background:#E2E3E8;border-radius:1px"></div>
<div class="a" style="left:1812.6px;top:825.18px;width:45px;height:43px;background:#E2E3E8;border-radius:1px"></div>
<div class="a" style="left:1868.7px;top:825.18px;width:43.3px;height:43px;background:#E2E3E8;border-radius:1px"></div>
<svg style="left:1756px;top:825.18px" width="160" height="44" viewBox="1756 350.3 160 44"><g transform="translate(0,0)">
<path d="M1772.2 366.3 A8.1 8.1 0 1 1 1773.8 375.3" fill="none" stroke="#000" stroke-width="2.3" stroke-linecap="round"/>
<path d="M1769 360.6 L1774.9 366.6 L1769.1 366.8 Z" fill="#000" stroke="#000" stroke-width="1" stroke-linejoin="round"/>
<path d="M1779 365 L1779.4 369.6 L1781.7 371.7" fill="none" stroke="#000" stroke-width="1.8" stroke-linecap="round" stroke-linejoin="round"/>
<path d="M1832.8 362.6 L1829 362.6 Q1826.8 362.6 1826.8 364.8 L1826.8 375.4 Q1826.8 377.6 1829 377.6 L1839.4 377.6 Q1841.6 377.6 1841.6 375.4 L1841.6 371.4" fill="none" stroke="#8C8D91" stroke-width="2"/>
<path d="M1830.6 373.8 L1831.6 369.6 L1839.2 362 L1842.6 365.4 L1835 373 Z" fill="#000" stroke="#000" stroke-width="0.8" stroke-linejoin="round"/>
<path d="M1840.6 360.6 L1842.2 359 Q1843.4 357.9 1844.6 359 L1845.8 360.2 Q1846.8 361.4 1845.7 362.5 L1844 364.2 Z" fill="#000"/>
<path d="M1883.7 363.4 L1898 363.4 L1896.9 377.2 Q1896.7 378.8 1895.1 378.8 L1886.6 378.8 Q1885 378.8 1884.9 377.2 Z" fill="#939498"/>
<path d="M1883 363.6 Q1881.6 363.6 1881.7 362.3 Q1881.9 360.9 1883.4 360.6 Q1886 360 1888 359.8 Q1889.1 358.5 1890.8 358.5 Q1892.5 358.5 1893.6 359.8 Q1895.6 360 1898.2 360.6 Q1899.7 360.9 1899.9 362.3 Q1900 363.6 1898.6 363.6 Z" fill="#000"/>
</g></svg>
<div class="t" style="left:91.68px;top:902px;font-size:22.40px;line-height:25px;color:#111;letter-spacing:0.20px;-webkit-text-stroke:0.3px #111;">9</div>
<div class="t" style="left:137.46px;top:902px;font-size:22.40px;line-height:25px;color:#111;letter-spacing:0.03px;-webkit-text-stroke:0.3px #111;">Ajay Mishra</div>
<div class="t" style="left:532.63px;top:902px;font-size:22.40px;line-height:25px;color:#111;letter-spacing:0.65px;-webkit-text-stroke:0.3px #111;">8596743212</div>
<div class="a" style="left:1300px;top:898.92px;width:103px;height:32.5px;box-sizing:border-box;border:1.8px solid #2447C2;border-radius:17px"></div>
<svg style="left:1310px;top:898.92px" width="30" height="32" viewBox="1310 356.2 30 32"><rect x="1313.2" y="362.4" width="22.2" height="16.6" rx="2.6" fill="#0A33B5"/><circle cx="1319.8" cy="368.2" r="2.5" fill="#fff"/><path d="M1315.6 375 Q1316 372.2 1319.8 372.2 Q1323.6 372.2 1324 375 L1324 375.6 L1315.6 375.6Z" fill="#fff"/><rect x="1327" y="367.8" width="5.5" height="1.8" rx="0.9" fill="#E4E8F6"/><rect x="1327" y="372" width="5.5" height="1.8" rx="0.9" fill="#E4E8F6"/></svg>
<div class="t" style="left:1347.31px;top:903px;font-size:19.80px;line-height:22px;color:#0A33B5;letter-spacing:-0.32px;-webkit-text-stroke:0.2px #0A33B5;">View</div>
<div class="a" style="left:1756.3px;top:893.02px;width:45px;height:43px;background:#E2E3E8;border-radius:1px"></div>
<div class="a" style="left:1812.6px;top:893.02px;width:45px;height:43px;background:#E2E3E8;border-radius:1px"></div>
<div class="a" style="left:1868.7px;top:893.02px;width:43.3px;height:43px;background:#E2E3E8;border-radius:1px"></div>
<svg style="left:1756px;top:893.02px" width="160" height="44" viewBox="1756 350.3 160 44"><g transform="translate(0,0)">
<path d="M1772.2 366.3 A8.1 8.1 0 1 1 1773.8 375.3" fill="none" stroke="#000" stroke-width="2.3" stroke-linecap="round"/>
<path d="M1769 360.6 L1774.9 366.6 L1769.1 366.8 Z" fill="#000" stroke="#000" stroke-width="1" stroke-linejoin="round"/>
<path d="M1779 365 L1779.4 369.6 L1781.7 371.7" fill="none" stroke="#000" stroke-width="1.8" stroke-linecap="round" stroke-linejoin="round"/>
<path d="M1832.8 362.6 L1829 362.6 Q1826.8 362.6 1826.8 364.8 L1826.8 375.4 Q1826.8 377.6 1829 377.6 L1839.4 377.6 Q1841.6 377.6 1841.6 375.4 L1841.6 371.4" fill="none" stroke="#8C8D91" stroke-width="2"/>
<path d="M1830.6 373.8 L1831.6 369.6 L1839.2 362 L1842.6 365.4 L1835 373 Z" fill="#000" stroke="#000" stroke-width="0.8" stroke-linejoin="round"/>
<path d="M1840.6 360.6 L1842.2 359 Q1843.4 357.9 1844.6 359 L1845.8 360.2 Q1846.8 361.4 1845.7 362.5 L1844 364.2 Z" fill="#000"/>
<path d="M1883.7 363.4 L1898 363.4 L1896.9 377.2 Q1896.7 378.8 1895.1 378.8 L1886.6 378.8 Q1885 378.8 1884.9 377.2 Z" fill="#939498"/>
<path d="M1883 363.6 Q1881.6 363.6 1881.7 362.3 Q1881.9 360.9 1883.4 360.6 Q1886 360 1888 359.8 Q1889.1 358.5 1890.8 358.5 Q1892.5 358.5 1893.6 359.8 Q1895.6 360 1898.2 360.6 Q1899.7 360.9 1899.9 362.3 Q1900 363.6 1898.6 363.6 Z" fill="#000"/>
</g></svg>
<div class="t" style="left:85.02px;top:970px;font-size:22.40px;line-height:25px;color:#111;letter-spacing:0.20px;-webkit-text-stroke:0.3px #111;">10</div>
<div class="t" style="left:137.00px;top:970px;font-size:22.40px;line-height:25px;color:#111;letter-spacing:0.03px;-webkit-text-stroke:0.3px #111;">Tofif Patel</div>
<div class="t" style="left:532.45px;top:970px;font-size:22.40px;line-height:25px;color:#111;letter-spacing:0.65px;-webkit-text-stroke:0.3px #111;">7878454512</div>
<div class="t" style="left:1135.26px;top:970px;font-size:22.40px;line-height:25px;color:#111;letter-spacing:-0.05px;-webkit-text-stroke:0.3px #111;">Male</div>
<div class="a" style="left:1300px;top:966.76px;width:103px;height:32.5px;box-sizing:border-box;border:1.8px solid #2447C2;border-radius:17px"></div>
<svg style="left:1310px;top:966.76px" width="30" height="32" viewBox="1310 356.2 30 32"><rect x="1313.2" y="362.4" width="22.2" height="16.6" rx="2.6" fill="#0A33B5"/><circle cx="1319.8" cy="368.2" r="2.5" fill="#fff"/><path d="M1315.6 375 Q1316 372.2 1319.8 372.2 Q1323.6 372.2 1324 375 L1324 375.6 L1315.6 375.6Z" fill="#fff"/><rect x="1327" y="367.8" width="5.5" height="1.8" rx="0.9" fill="#E4E8F6"/><rect x="1327" y="372" width="5.5" height="1.8" rx="0.9" fill="#E4E8F6"/></svg>
<div class="t" style="left:1347.31px;top:971px;font-size:19.80px;line-height:22px;color:#0A33B5;letter-spacing:-0.32px;-webkit-text-stroke:0.2px #0A33B5;">View</div>
<div class="a" style="left:1756.3px;top:960.86px;width:45px;height:43px;background:#E2E3E8;border-radius:1px"></div>
<div class="a" style="left:1812.6px;top:960.86px;width:45px;height:43px;background:#E2E3E8;border-radius:1px"></div>
<div class="a" style="left:1868.7px;top:960.86px;width:43.3px;height:43px;background:#E2E3E8;border-radius:1px"></div>
<svg style="left:1756px;top:960.86px" width="160" height="44" viewBox="1756 350.3 160 44"><g transform="translate(0,0)">
<path d="M1772.2 366.3 A8.1 8.1 0 1 1 1773.8 375.3" fill="none" stroke="#000" stroke-width="2.3" stroke-linecap="round"/>
<path d="M1769 360.6 L1774.9 366.6 L1769.1 366.8 Z" fill="#000" stroke="#000" stroke-width="1" stroke-linejoin="round"/>
<path d="M1779 365 L1779.4 369.6 L1781.7 371.7" fill="none" stroke="#000" stroke-width="1.8" stroke-linecap="round" stroke-linejoin="round"/>
<path d="M1832.8 362.6 L1829 362.6 Q1826.8 362.6 1826.8 364.8 L1826.8 375.4 Q1826.8 377.6 1829 377.6 L1839.4 377.6 Q1841.6 377.6 1841.6 375.4 L1841.6 371.4" fill="none" stroke="#8C8D91" stroke-width="2"/>
<path d="M1830.6 373.8 L1831.6 369.6 L1839.2 362 L1842.6 365.4 L1835 373 Z" fill="#000" stroke="#000" stroke-width="0.8" stroke-linejoin="round"/>
<path d="M1840.6 360.6 L1842.2 359 Q1843.4 357.9 1844.6 359 L1845.8 360.2 Q1846.8 361.4 1845.7 362.5 L1844 364.2 Z" fill="#000"/>
<path d="M1883.7 363.4 L1898 363.4 L1896.9 377.2 Q1896.7 378.8 1895.1 378.8 L1886.6 378.8 Q1885 378.8 1884.9 377.2 Z" fill="#939498"/>
<path d="M1883 363.6 Q1881.6 363.6 1881.7 362.3 Q1881.9 360.9 1883.4 360.6 Q1886 360 1888 359.8 Q1889.1 358.5 1890.8 358.5 Q1892.5 358.5 1893.6 359.8 Q1895.6 360 1898.2 360.6 Q1899.7 360.9 1899.9 362.3 Q1900 363.6 1898.6 363.6 Z" fill="#000"/>
</g></svg>
<div class="t" style="left:85.85px;top:1038px;font-size:22.40px;line-height:25px;color:#111;letter-spacing:0.20px;-webkit-text-stroke:0.3px #111;">11</div>
<div class="t" style="left:137.46px;top:1038px;font-size:22.40px;line-height:25px;color:#111;letter-spacing:0.03px;-webkit-text-stroke:0.3px #111;">Adity Jauhari</div>
<div class="t" style="left:532.45px;top:1038px;font-size:22.40px;line-height:25px;color:#111;letter-spacing:0.65px;-webkit-text-stroke:0.3px #111;">7359413185</div>
<div class="t" style="left:728.75px;top:1038px;font-size:22.40px;line-height:25px;color:#111;letter-spacing:-0.45px;-webkit-text-stroke:0.3px #111;">ahesanali@g...</div>
<div class="t" style="left:923.76px;top:1038px;font-size:22.40px;line-height:25px;color:#111;letter-spacing:0.20px;-webkit-text-stroke:0.3px #111;">K K W</div>
<div class="t" style="left:1135.26px;top:1038px;font-size:22.40px;line-height:25px;color:#111;letter-spacing:-0.05px;-webkit-text-stroke:0.3px #111;">Female</div>
<div class="a" style="left:1300px;top:1034.60px;width:103px;height:32.5px;box-sizing:border-box;border:1.8px solid #2447C2;border-radius:17px"></div>
<svg style="left:1310px;top:1034.60px" width="30" height="32" viewBox="1310 356.2 30 32"><rect x="1313.2" y="362.4" width="22.2" height="16.6" rx="2.6" fill="#0A33B5"/><circle cx="1319.8" cy="368.2" r="2.5" fill="#fff"/><path d="M1315.6 375 Q1316 372.2 1319.8 372.2 Q1323.6 372.2 1324 375 L1324 375.6 L1315.6 375.6Z" fill="#fff"/><rect x="1327" y="367.8" width="5.5" height="1.8" rx="0.9" fill="#E4E8F6"/><rect x="1327" y="372" width="5.5" height="1.8" rx="0.9" fill="#E4E8F6"/></svg>
<div class="t" style="left:1347.31px;top:1038px;font-size:19.80px;line-height:22px;color:#0A33B5;letter-spacing:-0.32px;-webkit-text-stroke:0.2px #0A33B5;">View</div>
<div class="a" style="left:1756.3px;top:1028.70px;width:45px;height:43px;background:#E2E3E8;border-radius:1px"></div>
<div class="a" style="left:1812.6px;top:1028.70px;width:45px;height:43px;background:#E2E3E8;border-radius:1px"></div>
<div class="a" style="left:1868.7px;top:1028.70px;width:43.3px;height:43px;background:#E2E3E8;border-radius:1px"></div>
<svg style="left:1756px;top:1028.70px" width="160" height="44" viewBox="1756 350.3 160 44"><g transform="translate(0,0)">
<path d="M1772.2 366.3 A8.1 8.1 0 1 1 1773.8 375.3" fill="none" stroke="#000" stroke-width="2.3" stroke-linecap="round"/>
<path d="M1769 360.6 L1774.9 366.6 L1769.1 366.8 Z" fill="#000" stroke="#000" stroke-width="1" stroke-linejoin="round"/>
<path d="M1779 365 L1779.4 369.6 L1781.7 371.7" fill="none" stroke="#000" stroke-width="1.8" stroke-linecap="round" stroke-linejoin="round"/>
<path d="M1832.8 362.6 L1829 362.6 Q1826.8 362.6 1826.8 364.8 L1826.8 375.4 Q1826.8 377.6 1829 377.6 L1839.4 377.6 Q1841.6 377.6 1841.6 375.4 L1841.6 371.4" fill="none" stroke="#8C8D91" stroke-width="2"/>
<path d="M1830.6 373.8 L1831.6 369.6 L1839.2 362 L1842.6 365.4 L1835 373 Z" fill="#000" stroke="#000" stroke-width="0.8" stroke-linejoin="round"/>
<path d="M1840.6 360.6 L1842.2 359 Q1843.4 357.9 1844.6 359 L1845.8 360.2 Q1846.8 361.4 1845.7 362.5 L1844 364.2 Z" fill="#000"/>
<path d="M1883.7 363.4 L1898 363.4 L1896.9 377.2 Q1896.7 378.8 1895.1 378.8 L1886.6 378.8 Q1885 378.8 1884.9 377.2 Z" fill="#939498"/>
<path d="M1883 363.6 Q1881.6 363.6 1881.7 362.3 Q1881.9 360.9 1883.4 360.6 Q1886 360 1888 359.8 Q1889.1 358.5 1890.8 358.5 Q1892.5 358.5 1893.6 359.8 Q1895.6 360 1898.2 360.6 Q1899.7 360.9 1899.9 362.3 Q1900 363.6 1898.6 363.6 Z" fill="#000"/>
</g></svg>
<div class="t" style="left:85.02px;top:1105px;font-size:22.40px;line-height:25px;color:#111;letter-spacing:0.20px;-webkit-text-stroke:0.3px #111;">12</div>
<div class="t" style="left:135.66px;top:1105px;font-size:22.40px;line-height:25px;color:#111;letter-spacing:0.03px;-webkit-text-stroke:0.3px #111;">Karan Raval</div>
<div class="t" style="left:532.55px;top:1105px;font-size:22.40px;line-height:25px;color:#111;letter-spacing:0.65px;-webkit-text-stroke:0.3px #111;">9898989556</div>
<div class="a" style="left:1300px;top:1102.44px;width:103px;height:32.5px;box-sizing:border-box;border:1.8px solid #2447C2;border-radius:17px"></div>
<svg style="left:1310px;top:1102.44px" width="30" height="32" viewBox="1310 356.2 30 32"><rect x="1313.2" y="362.4" width="22.2" height="16.6" rx="2.6" fill="#0A33B5"/><circle cx="1319.8" cy="368.2" r="2.5" fill="#fff"/><path d="M1315.6 375 Q1316 372.2 1319.8 372.2 Q1323.6 372.2 1324 375 L1324 375.6 L1315.6 375.6Z" fill="#fff"/><rect x="1327" y="367.8" width="5.5" height="1.8" rx="0.9" fill="#E4E8F6"/><rect x="1327" y="372" width="5.5" height="1.8" rx="0.9" fill="#E4E8F6"/></svg>
<div class="t" style="left:1347.31px;top:1106px;font-size:19.80px;line-height:22px;color:#0A33B5;letter-spacing:-0.32px;-webkit-text-stroke:0.2px #0A33B5;">View</div>
<div class="a" style="left:1756.3px;top:1096.54px;width:45px;height:43px;background:#E2E3E8;border-radius:1px"></div>
<div class="a" style="left:1812.6px;top:1096.54px;width:45px;height:43px;background:#E2E3E8;border-radius:1px"></div>
<div class="a" style="left:1868.7px;top:1096.54px;width:43.3px;height:43px;background:#E2E3E8;border-radius:1px"></div>
<svg style="left:1756px;top:1096.54px" width="160" height="44" viewBox="1756 350.3 160 44"><g transform="translate(0,0)">
<path d="M1772.2 366.3 A8.1 8.1 0 1 1 1773.8 375.3" fill="none" stroke="#000" stroke-width="2.3" stroke-linecap="round"/>
<path d="M1769 360.6 L1774.9 366.6 L1769.1 366.8 Z" fill="#000" stroke="#000" stroke-width="1" stroke-linejoin="round"/>
<path d="M1779 365 L1779.4 369.6 L1781.7 371.7" fill="none" stroke="#000" stroke-width="1.8" stroke-linecap="round" stroke-linejoin="round"/>
<path d="M1832.8 362.6 L1829 362.6 Q1826.8 362.6 1826.8 364.8 L1826.8 375.4 Q1826.8 377.6 1829 377.6 L1839.4 377.6 Q1841.6 377.6 1841.6 375.4 L1841.6 371.4" fill="none" stroke="#8C8D91" stroke-width="2"/>
<path d="M1830.6 373.8 L1831.6 369.6 L1839.2 362 L1842.6 365.4 L1835 373 Z" fill="#000" stroke="#000" stroke-width="0.8" stroke-linejoin="round"/>
<path d="M1840.6 360.6 L1842.2 359 Q1843.4 357.9 1844.6 359 L1845.8 360.2 Q1846.8 361.4 1845.7 362.5 L1844 364.2 Z" fill="#000"/>
<path d="M1883.7 363.4 L1898 363.4 L1896.9 377.2 Q1896.7 378.8 1895.1 378.8 L1886.6 378.8 Q1885 378.8 1884.9 377.2 Z" fill="#939498"/>
<path d="M1883 363.6 Q1881.6 363.6 1881.7 362.3 Q1881.9 360.9 1883.4 360.6 Q1886 360 1888 359.8 Q1889.1 358.5 1890.8 358.5 Q1892.5 358.5 1893.6 359.8 Q1895.6 360 1898.2 360.6 Q1899.7 360.9 1899.9 362.3 Q1900 363.6 1898.6 363.6 Z" fill="#000"/>
</g></svg>
<div class="t" style="left:85.02px;top:1173px;font-size:22.40px;line-height:25px;color:#111;letter-spacing:0.20px;-webkit-text-stroke:0.3px #111;">13</div>
<div class="t" style="left:136.48px;top:1173px;font-size:22.40px;line-height:25px;color:#111;letter-spacing:0.03px;-webkit-text-stroke:0.3px #111;">Sanjesh Raval</div>
<div class="t" style="left:532.55px;top:1173px;font-size:22.40px;line-height:25px;color:#111;letter-spacing:0.65px;-webkit-text-stroke:0.3px #111;">9865745632</div>
<div class="a" style="left:1300px;top:1170.28px;width:103px;height:32.5px;box-sizing:border-box;border:1.8px solid #2447C2;border-radius:17px"></div>
<svg style="left:1310px;top:1170.28px" width="30" height="32" viewBox="1310 356.2 30 32"><rect x="1313.2" y="362.4" width="22.2" height="16.6" rx="2.6" fill="#0A33B5"/><circle cx="1319.8" cy="368.2" r="2.5" fill="#fff"/><path d="M1315.6 375 Q1316 372.2 1319.8 372.2 Q1323.6 372.2 1324 375 L1324 375.6 L1315.6 375.6Z" fill="#fff"/><rect x="1327" y="367.8" width="5.5" height="1.8" rx="0.9" fill="#E4E8F6"/><rect x="1327" y="372" width="5.5" height="1.8" rx="0.9" fill="#E4E8F6"/></svg>
<div class="t" style="left:1347.31px;top:1174px;font-size:19.80px;line-height:22px;color:#0A33B5;letter-spacing:-0.32px;-webkit-text-stroke:0.2px #0A33B5;">View</div>
<div class="a" style="left:1756.3px;top:1164.38px;width:45px;height:43px;background:#E2E3E8;border-radius:1px"></div>
<div class="a" style="left:1812.6px;top:1164.38px;width:45px;height:43px;background:#E2E3E8;border-radius:1px"></div>
<div class="a" style="left:1868.7px;top:1164.38px;width:43.3px;height:43px;background:#E2E3E8;border-radius:1px"></div>
<svg style="left:1756px;top:1164.38px" width="160" height="44" viewBox="1756 350.3 160 44"><g transform="translate(0,0)">
<path d="M1772.2 366.3 A8.1 8.1 0 1 1 1773.8 375.3" fill="none" stroke="#000" stroke-width="2.3" stroke-linecap="round"/>
<path d="M1769 360.6 L1774.9 366.6 L1769.1 366.8 Z" fill="#000" stroke="#000" stroke-width="1" stroke-linejoin="round"/>
<path d="M1779 365 L1779.4 369.6 L1781.7 371.7" fill="none" stroke="#000" stroke-width="1.8" stroke-linecap="round" stroke-linejoin="round"/>
<path d="M1832.8 362.6 L1829 362.6 Q1826.8 362.6 1826.8 364.8 L1826.8 375.4 Q1826.8 377.6 1829 377.6 L1839.4 377.6 Q1841.6 377.6 1841.6 375.4 L1841.6 371.4" fill="none" stroke="#8C8D91" stroke-width="2"/>
<path d="M1830.6 373.8 L1831.6 369.6 L1839.2 362 L1842.6 365.4 L1835 373 Z" fill="#000" stroke="#000" stroke-width="0.8" stroke-linejoin="round"/>
<path d="M1840.6 360.6 L1842.2 359 Q1843.4 357.9 1844.6 359 L1845.8 360.2 Q1846.8 361.4 1845.7 362.5 L1844 364.2 Z" fill="#000"/>
<path d="M1883.7 363.4 L1898 363.4 L1896.9 377.2 Q1896.7 378.8 1895.1 378.8 L1886.6 378.8 Q1885 378.8 1884.9 377.2 Z" fill="#939498"/>
<path d="M1883 363.6 Q1881.6 363.6 1881.7 362.3 Q1881.9 360.9 1883.4 360.6 Q1886 360 1888 359.8 Q1889.1 358.5 1890.8 358.5 Q1892.5 358.5 1893.6 359.8 Q1895.6 360 1898.2 360.6 Q1899.7 360.9 1899.9 362.3 Q1900 363.6 1898.6 363.6 Z" fill="#000"/>
</g></svg>
<div class="t" style="left:85.02px;top:1241px;font-size:22.40px;line-height:25px;color:#111;letter-spacing:0.20px;-webkit-text-stroke:0.3px #111;">14</div>
<div class="t" style="left:137.46px;top:1241px;font-size:22.40px;line-height:25px;color:#111;letter-spacing:0.03px;-webkit-text-stroke:0.3px #111;">Adity Jauhari</div>
<div class="t" style="left:532.45px;top:1241px;font-size:22.40px;line-height:25px;color:#111;letter-spacing:0.65px;-webkit-text-stroke:0.3px #111;">7455444544</div>
<div class="t" style="left:728.15px;top:1241px;font-size:22.40px;line-height:25px;color:#111;letter-spacing:-0.45px;-webkit-text-stroke:0.3px #111;">hetalkahi@g...</div>
<div class="t" style="left:923.76px;top:1241px;font-size:22.40px;line-height:25px;color:#111;letter-spacing:0.20px;-webkit-text-stroke:0.3px #111;">K K W</div>
<div class="t" style="left:1135.26px;top:1241px;font-size:22.40px;line-height:25px;color:#111;letter-spacing:-0.05px;-webkit-text-stroke:0.3px #111;">Female</div>
<div class="a" style="left:1300px;top:1238.12px;width:103px;height:32.5px;box-sizing:border-box;border:1.8px solid #2447C2;border-radius:17px"></div>
<svg style="left:1310px;top:1238.12px" width="30" height="32" viewBox="1310 356.2 30 32"><rect x="1313.2" y="362.4" width="22.2" height="16.6" rx="2.6" fill="#0A33B5"/><circle cx="1319.8" cy="368.2" r="2.5" fill="#fff"/><path d="M1315.6 375 Q1316 372.2 1319.8 372.2 Q1323.6 372.2 1324 375 L1324 375.6 L1315.6 375.6Z" fill="#fff"/><rect x="1327" y="367.8" width="5.5" height="1.8" rx="0.9" fill="#E4E8F6"/><rect x="1327" y="372" width="5.5" height="1.8" rx="0.9" fill="#E4E8F6"/></svg>
<div class="t" style="left:1347.31px;top:1242px;font-size:19.80px;line-height:22px;color:#0A33B5;letter-spacing:-0.32px;-webkit-text-stroke:0.2px #0A33B5;">View</div>
<div class="a" style="left:1756.3px;top:1232.22px;width:45px;height:43px;background:#E2E3E8;border-radius:1px"></div>
<div class="a" style="left:1812.6px;top:1232.22px;width:45px;height:43px;background:#E2E3E8;border-radius:1px"></div>
<div class="a" style="left:1868.7px;top:1232.22px;width:43.3px;height:43px;background:#E2E3E8;border-radius:1px"></div>
<svg style="left:1756px;top:1232.22px" width="160" height="44" viewBox="1756 350.3 160 44"><g transform="translate(0,0)">
<path d="M1772.2 366.3 A8.1 8.1 0 1 1 1773.8 375.3" fill="none" stroke="#000" stroke-width="2.3" stroke-linecap="round"/>
<path d="M1769 360.6 L1774.9 366.6 L1769.1 366.8 Z" fill="#000" stroke="#000" stroke-width="1" stroke-linejoin="round"/>
<path d="M1779 365 L1779.4 369.6 L1781.7 371.7" fill="none" stroke="#000" stroke-width="1.8" stroke-linecap="round" stroke-linejoin="round"/>
<path d="M1832.8 362.6 L1829 362.6 Q1826.8 362.6 1826.8 364.8 L1826.8 375.4 Q1826.8 377.6 1829 377.6 L1839.4 377.6 Q1841.6 377.6 1841.6 375.4 L1841.6 371.4" fill="none" stroke="#8C8D91" stroke-width="2"/>
<path d="M1830.6 373.8 L1831.6 369.6 L1839.2 362 L1842.6 365.4 L1835 373 Z" fill="#000" stroke="#000" stroke-width="0.8" stroke-linejoin="round"/>
<path d="M1840.6 360.6 L1842.2 359 Q1843.4 357.9 1844.6 359 L1845.8 360.2 Q1846.8 361.4 1845.7 362.5 L1844 364.2 Z" fill="#000"/>
<path d="M1883.7 363.4 L1898 363.4 L1896.9 377.2 Q1896.7 378.8 1895.1 378.8 L1886.6 378.8 Q1885 378.8 1884.9 377.2 Z" fill="#939498"/>
<path d="M1883 363.6 Q1881.6 363.6 1881.7 362.3 Q1881.9 360.9 1883.4 360.6 Q1886 360 1888 359.8 Q1889.1 358.5 1890.8 358.5 Q1892.5 358.5 1893.6 359.8 Q1895.6 360 1898.2 360.6 Q1899.7 360.9 1899.9 362.3 Q1900 363.6 1898.6 363.6 Z" fill="#000"/>
</g></svg>
<div class="a" style="left:1467.2px;top:336.5px;width:4.6px;height:920px;background:#EEB20F;border-radius:2px 2px 0 0"></div>
<div class="a" style="left:1993px;top:0;width:7px;height:1250px;background:#E8E8EA;"></div>
<div class="a" style="left:1994px;top:0;width:6px;height:456px;background:#B4B5B9;"></div>
</body></html>
